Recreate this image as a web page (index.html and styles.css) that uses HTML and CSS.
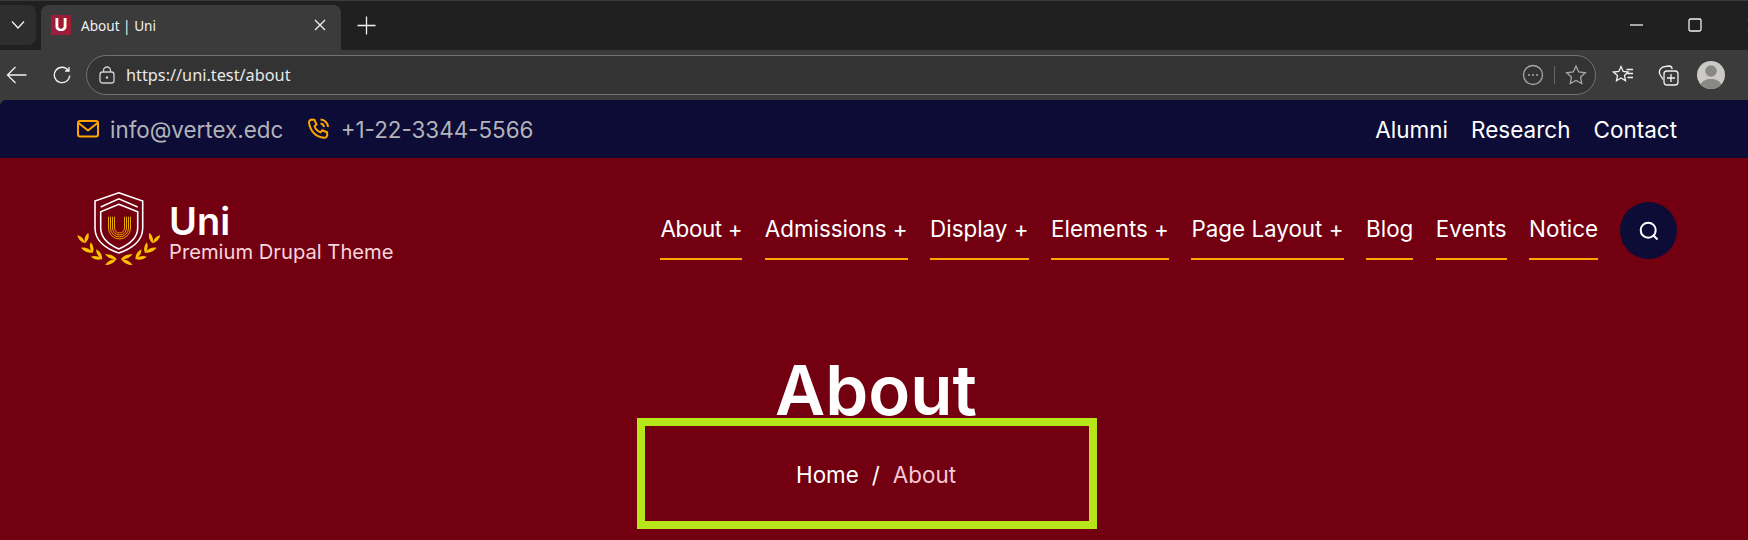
FILE: index.html
```html
<!DOCTYPE html>
<html lang="en">
<head>
  <meta charset="UTF-8">
  <title>About | Uni</title>
  <link rel="stylesheet" href="styles.css">
</head>
<body>
  <!-- Browser chrome -->
  <div class="tabstrip">
    <div class="tab-menu">
      <svg width="16" height="10" viewBox="0 0 16 10"><path d="M2 1.500 8 8l6-6.500" class="ico"/></svg>
    </div>
    <div class="tab">
      <span class="favicon">U</span>
      <span class="tab-title">About | Uni</span>
      <svg class="tab-close" width="12" height="12" viewBox="0 0 12 12"><path d="M1 1l10 10M11 1 1 11" class="ico"/></svg>
    </div>
    <svg class="new-tab" width="19" height="19" viewBox="0 0 19 19"><path d="M9.500 .5v18M.5 9.500h18" class="ico"/></svg>
    <div class="win-controls">
      <svg class="win-min" width="13" height="2" viewBox="0 0 13 2"><path d="M0 1h13" class="ico"/></svg>
      <svg class="win-max" width="14" height="14" viewBox="0 0 14 14"><rect x="1" y="1" width="12" height="12" rx="1.500" class="ico"/></svg>
      <svg class="win-close" width="14" height="14" viewBox="0 0 14 14"><path d="M1 1l12 12M13 1 1 13" class="ico"/></svg>
    </div>
  </div>

  <div class="toolbar">
    <svg class="tool-back" width="21" height="20" viewBox="0 0 21 20"><path d="M20.500 10H1.500M9.500 2 1.500 10l8 8" class="ico"/></svg>
    <svg class="tool-reload" width="18" height="18" viewBox="0 0 18 18"><path d="M15.300 4.500A7.700 7.700 0 1 0 16.700 9.500M16 1v4H12" class="ico"/></svg>
    <div class="address">
      <svg width="16" height="18" viewBox="0 0 16 18"><rect x="1" y="6" width="14" height="11" rx="2.500" class="ico dim"/><path d="M4.500 6V4.500a3.500 3.500 0 0 1 7 0V6" class="ico dim"/><circle cx="8" cy="11.500" r="1.200" fill="#d0d0d0"/></svg>
      <span class="url">https://uni.test/about</span>
      <svg class="addr-more" width="22" height="22" viewBox="0 0 22 22"><circle cx="11" cy="11" r="9.500" class="ico grey"/><circle cx="7" cy="11" r="1" fill="#a8a8a8"/><circle cx="11" cy="11" r="1" fill="#a8a8a8"/><circle cx="15" cy="11" r="1" fill="#a8a8a8"/></svg>
      <span class="addr-sep"></span>
      <svg width="22" height="22" viewBox="0 0 22 22"><path d="M11 2l2.800 6 6.500.8-4.800 4.400 1.300 6.400L11 16.400l-5.800 3.200 1.300-6.400L1.700 8.800 8.200 8z" class="ico grey"/></svg>
    </div>
    <svg class="tool-fav" width="22" height="22" viewBox="0 0 22 22"><path d="M9 2.500l2.200 5 5 .6-3.700 3.400 1 5.200L9 14l-4.500 2.700 1-5.200L1.500 8.100l5.300-.6zM14.500 5.500H21M16 9.500h5M15.500 13.500H21" class="ico"/></svg>
    <svg class="tool-coll" width="22" height="22" viewBox="0 0 22 22"><path d="M6 15.500 3 10.500Q1 6.500 5 3.500 7 2.500 12.500 2q2 0 2.800 3" class="ico"/><rect x="7" y="7" width="14" height="14" rx="3" class="ico"/><path d="M14 10v8M10 14h8" class="ico"/></svg>
    <div class="avatar">
      <svg width="28" height="28" viewBox="0 0 28 28"><circle cx="14" cy="14" r="14" fill="#cbcac6"/><circle cx="14" cy="10" r="5.800" fill="#8a8884"/><path d="M3.500 23.300C6 19.300 10 18 14 18s8 1.300 10.500 5.300A14 14 0 0 1 14 28 14 14 0 0 1 3.500 23.300z" fill="#8a8884"/></svg>
    </div>
  </div>

  <!-- Site -->
  <div class="site">
    <div class="topbar">
      <div class="contact-list">
        <a class="contact-item">
          <svg width="22" height="18" viewBox="0 0 22 18"><rect x="1" y="1" width="20" height="15.500" rx="2" class="gold-line"/><path d="M1.500 3 11 10.500 20.500 3" class="gold-line"/></svg>
          info@vertex.edc
        </a>
        <a class="contact-item">
          <svg width="23" height="22" viewBox="0 0 22 22"><path d="M4.500 1.500 7 1.800l2 4.700-2 1.800c.9 2.800 3.200 5 6 6l1.800-2 4.700 2 .3 2.500c0 1.700-1.500 3.200-3.200 3C8.500 19.200 2.800 13.500 1.500 4.700c-.2-1.700 1.300-3.200 3-3.200z" class="gold-line"/><path d="M13 5.500a4 4 0 0 1 3.500 3.500M13 1.500a8 8 0 0 1 7.500 7.500" class="gold-line"/></svg>
          +1-22-3344-5566
        </a>
      </div>
      <nav class="top-links">
        <a>Alumni</a>
        <a>Research</a>
        <a>Contact</a>
      </nav>
    </div>

    <header class="site-header">
      <a class="brand">
        <svg class="brand-logo" width="84" height="78" viewBox="0 0 84 78">
          <g fill="none" stroke="#fff" stroke-width="1.600">
            <path d="M41.800 .8 65.700 9V36C65.700 49 54 57 41.800 61 29.600 57 18 49 18 36V9z"/>
            <path d="M23.700 15 41.800 6.800 60.700 15"/>
            <path d="M41.800 12.300 60.700 19.700V36C60.700 46 51 53 41.800 57 32.600 53 23.700 46 23.700 36V19.700z"/>
          </g>
          <g fill="none" stroke="#eaa400" stroke-width="1">
            <path d="M31.500 24.700V36a11 11 0 0 0 22 0V24.700"/>
            <path d="M33.500 24.700V36a9 9 0 0 0 18 0V24.700"/>
            <path d="M35.500 24.700V36a7 7 0 0 0 14 0V24.700"/>
            <path d="M37.500 24.700V36a5 5 0 0 0 10 0V24.700"/>
          </g>
          <path id="laurel" fill="#fcc000" d="M.3 43Q1.600 49.500 8 51.300 6.700 44.800 .3 43zM11.300 40.700Q13 47 8 51.300 6.300 45 11.300 40.700zM4 55.700Q8.400 61.400 15.700 60.700 11.300 55 4 55.700zM13.700 50.300Q18.100 54.800 15.700 60.700 11.300 56.200 13.700 50.300zM13.700 64.700Q18.800 69.300 25.300 67 20.200 62.400 13.700 64.700zM19 57.300Q25 60.200 25.300 67 19.200 64 19 57.300zM28 62.300Q35.200 61.400 39.700 67 32.600 68 28 62.300zM28 73Q35.500 73.100 39.700 67 32.200 66.900 28 73z"/>
          <use href="#laurel" transform="matrix(-1 0 0 1 83.600 0)"/>
        </svg>
        <span class="brand-text">
          <span class="brand-name">Uni</span>
          <span class="brand-tag">Premium Drupal Theme</span>
        </span>
      </a>
      <nav class="main-nav">
        <a class="nav-first">About +</a>
        <a>Admissions +</a>
        <a>Display +</a>
        <a>Elements +</a>
        <a>Page Layout +</a>
        <a>Blog</a>
        <a>Events</a>
        <a>Notice</a>
      </nav>
      <button class="search-btn">
        <svg width="20" height="20" viewBox="0 0 20 20"><circle cx="9.200" cy="9.200" r="7.500" class="ico thick"/><path d="M14.500 14.500 18.500 18.500" class="ico thick"/></svg>
      </button>
    </header>

    <section class="page-banner">
      <h1>About</h1>
      <div class="breadcrumb">
        <a>Home</a>
        <span class="crumb-sep">/</span>
        <span class="crumb-current">About</span>
      </div>
    </section>
  </div>
</body>
</html>
```

FILE: styles.css
```css
html, body {
  margin: 0;
  padding: 0;
  height: 540px;
  overflow: hidden;
  background: #720010;
}

body {
  font-family: 'Inter', sans-serif;
  border-top: 1px solid #3a3a3a;
  box-sizing: border-box;
}

a {
  color: inherit;
  text-decoration: none;
}

.ico {
  fill: none;
  stroke: #f2f2f2;
  stroke-width: 1.300;
}

.ico.dim {
  stroke: #d0d0d0;
}

.ico.grey {
  stroke: #a8a8a8;
}

.ico.thick {
  stroke: #fff;
  stroke-width: 2;
}

/* Browser chrome */
.tabstrip {
  display: flex;
  align-items: flex-start;
  height: 49px;
  padding-top: 4px;
  box-sizing: border-box;
  background: #202020;
  font-family: 'Noto Sans', sans-serif;
}

.tab-menu {
  width: 36px;
  height: 40px;
  display: flex;
  align-items: center;
  justify-content: center;
  background: #2e2e2e;
  border-radius: 0 8px 8px 0;
  margin-right: 5px;
}

.tab {
  width: 300px;
  height: 45px;
  display: flex;
  align-items: center;
  background: #3b3b3b;
  border-radius: 8px 8px 0 0;
  padding: 0 15px 5px 10px;
  box-sizing: border-box;
  color: #f0f0f0;
  font-size: 13.600px;
}

.favicon {
  width: 20px;
  height: 20px;
  flex: none;
  display: flex;
  align-items: center;
  justify-content: center;
  background: #9c1c3a;
  color: #fff;
  font-family: 'Liberation Sans', sans-serif;
  font-size: 18px;
  font-weight: 700;
  margin-right: 10px;
}

.tab-title {
  flex: 1;
}

.new-tab {
  margin: 11px 0 0 16px;
}

.win-controls {
  margin-left: auto;
  display: flex;
  align-items: center;
  height: 40px;
  width: 118px;
  flex: none;
  overflow: hidden;
}

.win-controls svg {
  flex: none;
}

.win-min {
  margin-right: 45px;
}

.win-max {
  margin-right: 45px;
}

.toolbar {
  display: flex;
  align-items: center;
  height: 50px;
  background: #3b3b3b;
  padding-left: 6px;
  box-sizing: border-box;
}

.tool-back {
  margin-right: 26px;
}

.tool-reload {
  margin-right: 15px;
}

.address {
  width: 1510px;
  height: 40px;
  flex: none;
  display: flex;
  align-items: center;
  box-sizing: border-box;
  padding: 0 8px 0 12px;
  border: 1px solid #727272;
  border-radius: 20px;
  background: #333;
  color: #e8e8e8;
  font-family: 'Noto Sans', sans-serif;
  font-size: 16.300px;
}

.url {
  margin-left: 11px;
  flex: 1;
}

.addr-sep {
  width: 1px;
  height: 18px;
  background: #666;
  margin: 0 10px;
}

.tool-fav {
  margin-left: 16px;
}

.tool-coll {
  margin-left: 23px;
}

.avatar {
  margin-left: 18px;
  display: flex;
}

/* Site */
.site {
  background: #3b3b3b;
}

.topbar {
  height: 58px;
  display: flex;
  align-items: center;
  justify-content: space-between;
  padding: 0 71px 0 77px;
  background: #0c0c36;
  border-radius: 6px 0 0 0;
  font-size: 22.500px;
}

.contact-list {
  display: flex;
  gap: 23.500px;
  color: #b3b3b9;
  font-size: 22.400px;
}

.contact-item {
  display: flex;
  align-items: center;
  gap: 11px;
}

.gold-line {
  fill: none;
  stroke: #ffa400;
  stroke-width: 2;
}

.top-links {
  display: flex;
  gap: 23px;
  color: #fff;
}

.site-header {
  display: flex;
  align-items: flex-start;
  height: 102px;
  box-sizing: border-box;
  padding: 44px 71px 0 77px;
  background: #720010;
  color: #fff;
  position: relative;
  z-index: 1;
}

.brand {
  display: flex;
  align-items: flex-start;
  margin-top: -10px;
  margin-right: auto;
}

.brand-logo {
  flex: none;
}

.brand-text {
  display: flex;
  flex-direction: column;
  margin: 10px 0 0 8px;
}

.brand-name {
  font-size: 38px;
  font-weight: 580;
  line-height: 38px;
}

.brand-tag {
  font-size: 20.200px;
  line-height: 24px;
  color: #f6d5dd;
}

.main-nav {
  display: flex;
  gap: 22.500px;
  margin-right: 22px;
  padding-top: 14px;
  font-size: 22.400px;
  line-height: 26px;
}

.main-nav a {
  padding-bottom: 16px;
  border-bottom: 2px solid #ffa400;
}

.main-nav .nav-first {
  letter-spacing: -0.350px;
}

.search-btn {
  width: 57px;
  height: 57px;
  border: 0;
  padding: 0;
  border-radius: 50%;
  background: #0c0c36;
  display: flex;
  align-items: center;
  justify-content: center;
}

.page-banner {
  background: #720010;
  color: #fff;
  text-align: center;
  height: 280px;
  padding-left: 4px;
  box-sizing: border-box;
  position: relative;
}

.page-banner h1 {
  margin: 0;
  padding-top: 88px;
  font-size: 69px;
  font-weight: 560;
  line-height: 84px;
}

.breadcrumb {
  display: flex;
  justify-content: center;
  gap: 13px;
  margin-top: 28px;
  font-size: 22.400px;
  line-height: 30px;
}

.crumb-current {
  color: #f6c8d4;
}

/* green annotation box drawn over the screenshot */
.page-banner::after {
  content: '';
  position: absolute;
  left: 637px;
  top: 158px;
  width: 460px;
  height: 111px;
  box-sizing: border-box;
  border: 8px solid #b6e61a;
}
```
